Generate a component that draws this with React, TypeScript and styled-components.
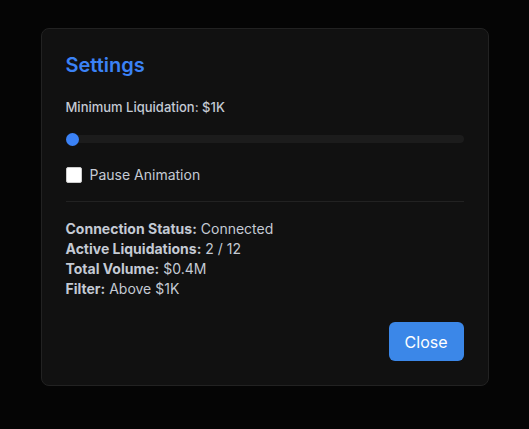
import React from 'react';
import styled, { createGlobalStyle } from 'styled-components';

const GlobalStyle = createGlobalStyle`
	html, body {
		margin: 0;
		padding: 0;
		background: #050505;
	}
	* {
		box-sizing: border-box;
	}
`;

const stats: { label: string; value: string }[] = [
	{ label: 'Connection Status:', value: 'Connected' },
	{ label: 'Active Liquidations:', value: '2 / 12' },
	{ label: 'Total Volume:', value: '$0.4M' },
	{ label: 'Filter:', value: 'Above $1K' },
];

const App = (): JSX.Element => {
	const [minValue, setMinValue] = React.useState<number>(1);
	const [paused, setPaused] = React.useState<boolean>(false);

	return (
		<Overlay>
			<GlobalStyle />
			<Panel>
				<Title>Settings</Title>
				<FieldLabel>Minimum Liquidation: ${minValue}K</FieldLabel>
				<Slider
					type="range"
					min={1}
					max={100}
					value={minValue}
					onChange={(e) => setMinValue(Number(e.target.value))}
				/>
				<CheckRow>
					<Checkbox type="checkbox" checked={paused} onChange={(e) => setPaused(e.target.checked)} />
					<span>Pause Animation</span>
				</CheckRow>
				<Divider />
				<Stats>
					{stats.map((s) => (
						<StatLine key={s.label}>
							<strong>{s.label}</strong> {s.value}
						</StatLine>
					))}
				</Stats>
				<Footer>
					<CloseButton>Close</CloseButton>
				</Footer>
			</Panel>
		</Overlay>
	);
};

const Overlay = styled.div`
	min-height: 429px;
	display: flex;
	justify-content: center;
	align-items: flex-start;
	padding-top: 28px;
	font-family: Inter, 'Noto Sans', sans-serif;
`;

const Panel = styled.div`
	width: 448px;
	background: #111111;
	border: 1px solid #222222;
	border-radius: 8px;
	padding: 24px;
	display: flex;
	flex-direction: column;
`;

const Title = styled.h2`
	margin: 0 0 20px;
	font-size: 20px;
	line-height: 24px;
	font-weight: 600;
	color: #3b82f6;
`;

const FieldLabel = styled.div`
	font-size: 13px;
	line-height: 20px;
	font-weight: 500;
	color: #c4cad4;
	margin-bottom: 12px;
`;

const Slider = styled.input`
	-webkit-appearance: none;
	appearance: none;
	width: 100%;
	height: 8px;
	margin: 6px 0 0;
	border-radius: 4px;
	background: #1c1c1c;
	outline: none;

	&::-webkit-slider-thumb {
		-webkit-appearance: none;
		appearance: none;
		width: 13px;
		height: 13px;
		border-radius: 50%;
		background: #3b82f6;
		border: none;
		cursor: pointer;
	}
`;

const CheckRow = styled.label`
	display: flex;
	align-items: center;
	gap: 8px;
	margin-top: 22px;
	font-size: 14px;
	line-height: 20px;
	color: #c4cad4;
	cursor: pointer;
`;

const Checkbox = styled.input`
	-webkit-appearance: none;
	appearance: none;
	width: 16px;
	height: 16px;
	margin: 0;
	border-radius: 2px;
	background: #ffffff;
	border: 1px solid #cccccc;

	&:checked {
		background: #3b82f6;
		border-color: #3b82f6;
	}
`;

const Divider = styled.hr`
	border: none;
	border-top: 1px solid #222222;
	margin: 16px 0 17px;
	width: 100%;
`;

const Stats = styled.div`
	display: flex;
	flex-direction: column;
	font-size: 14px;
	line-height: 20px;
	color: #c4cad4;

	strong {
		font-weight: 700;
	}
`;

const StatLine = styled.div``;

const Footer = styled.div`
	display: flex;
	justify-content: flex-end;
	margin-top: 23px;
`;

const CloseButton = styled.button`
	background: #3b87e8;
	color: #ffffff;
	border: none;
	border-radius: 6px;
	font-family: inherit;
	font-size: 16px;
	padding: 0 16px;
	height: 39px;
	cursor: pointer;
`;

export default App;
